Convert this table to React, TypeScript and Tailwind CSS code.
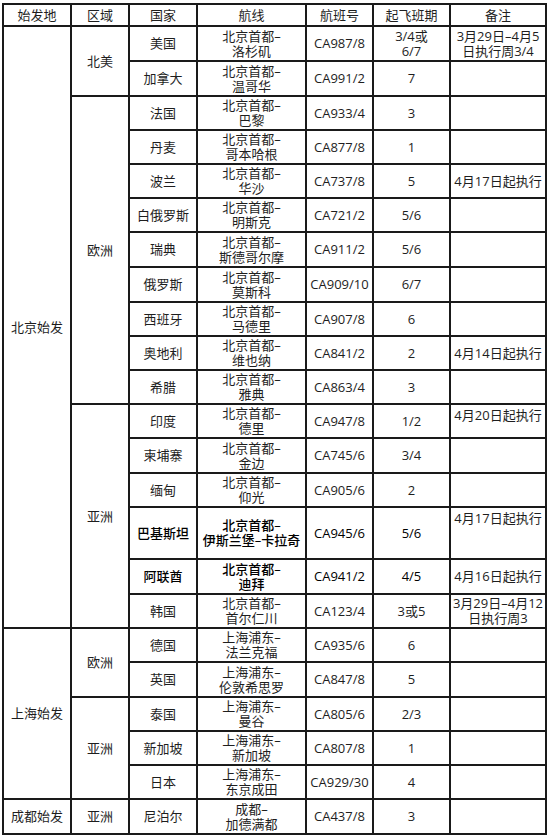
import React from "react"

type Row = {
  origin?: { text: string; span: number }
  region?: { text: string; span: number }
  country: string
  route: [string, string]
  flight: string
  days: string[]
  note?: string[]
  noteTop?: boolean
  bold?: boolean
  h: string
}

const rows: Row[] = [
  { origin: { text: "北京始发", span: 17 }, region: { text: "北美", span: 2 }, country: "美国", route: ["北京首都–", "洛杉矶"], flight: "CA987/8", days: ["3/4或", "6/7"], note: ["3月29日–4月5", "日执行周3/4"], h: "h-[35px]" },
  { country: "加拿大", route: ["北京首都–", "温哥华"], flight: "CA991/2", days: ["7"], h: "h-[35px]" },
  { region: { text: "欧洲", span: 9 }, country: "法国", route: ["北京首都–", "巴黎"], flight: "CA933/4", days: ["3"], h: "h-[34px]" },
  { country: "丹麦", route: ["北京首都–", "哥本哈根"], flight: "CA877/8", days: ["1"], h: "h-[34px]" },
  { country: "波兰", route: ["北京首都–", "华沙"], flight: "CA737/8", days: ["5"], note: ["4月17日起执行"], h: "h-[34px]" },
  { country: "白俄罗斯", route: ["北京首都–", "明斯克"], flight: "CA721/2", days: ["5/6"], h: "h-[34px]" },
  { country: "瑞典", route: ["北京首都–", "斯德哥尔摩"], flight: "CA911/2", days: ["5/6"], h: "h-[35px]" },
  { country: "俄罗斯", route: ["北京首都–", "莫斯科"], flight: "CA909/10", days: ["6/7"], h: "h-[35px]" },
  { country: "西班牙", route: ["北京首都–", "马德里"], flight: "CA907/8", days: ["6"], h: "h-[34px]" },
  { country: "奥地利", route: ["北京首都–", "维也纳"], flight: "CA841/2", days: ["2"], note: ["4月14日起执行"], h: "h-[34px]" },
  { country: "希腊", route: ["北京首都–", "雅典"], flight: "CA863/4", days: ["3"], h: "h-[34px]" },
  { region: { text: "亚洲", span: 6 }, country: "印度", route: ["北京首都–", "德里"], flight: "CA947/8", days: ["1/2"], note: ["4月20日起执行"], noteTop: true, h: "h-[34px]" },
  { country: "柬埔寨", route: ["北京首都–", "金边"], flight: "CA745/6", days: ["3/4"], h: "h-[35px]" },
  { country: "缅甸", route: ["北京首都–", "仰光"], flight: "CA905/6", days: ["2"], h: "h-[34px]" },
  { country: "巴基斯坦", route: ["北京首都–", "伊斯兰堡–卡拉奇"], flight: "CA945/6", days: ["5/6"], note: ["4月17日起执行"], noteTop: true, bold: true, h: "h-[52px]" },
  { country: "阿联酋", route: ["北京首都–", "迪拜"], flight: "CA941/2", days: ["4/5"], note: ["4月16日起执行"], bold: true, h: "h-[35px]" },
  { country: "韩国", route: ["北京首都–", "首尔仁川"], flight: "CA123/4", days: ["3或5"], note: ["3月29日–4月12", "日执行周3"], h: "h-[34px]" },
  { origin: { text: "上海始发", span: 5 }, region: { text: "欧洲", span: 2 }, country: "德国", route: ["上海浦东–", "法兰克福"], flight: "CA935/6", days: ["6"], h: "h-[34px]" },
  { country: "英国", route: ["上海浦东–", "伦敦希思罗"], flight: "CA847/8", days: ["5"], h: "h-[35px]" },
  { region: { text: "亚洲", span: 3 }, country: "泰国", route: ["上海浦东–", "曼谷"], flight: "CA805/6", days: ["2/3"], h: "h-[34px]" },
  { country: "新加坡", route: ["上海浦东–", "新加坡"], flight: "CA807/8", days: ["1"], h: "h-[34px]" },
  { country: "日本", route: ["上海浦东–", "东京成田"], flight: "CA929/30", days: ["4"], h: "h-[34px]" },
  { origin: { text: "成都始发", span: 1 }, region: { text: "亚洲", span: 1 }, country: "尼泊尔", route: ["成都–", "加德满都"], flight: "CA437/8", days: ["3"], h: "h-[35px]" },
]

const cell = "border-2 border-[#1a1a1a] p-0 text-center align-middle"

function Lines({ items }: { items: string[] }) {
  return (
    <>
      {items.map((t, i) => (
        <div key={i}>{t}</div>
      ))}
    </>
  )
}

export default function App() {
  return (
    <div className="min-h-[837px] w-[550px] bg-white pl-[2px] pt-[3px] font-['Open_Sans','Noto_Sans_CJK_SC',sans-serif] text-[13px] leading-[15px] text-[#1e1e1e]">
      <table className="w-[545px] table-fixed border-collapse">
        <colgroup>
          <col className="w-[68px]" />
          <col className="w-[58px]" />
          <col className="w-[68px]" />
          <col className="w-[109px]" />
          <col className="w-[67px]" />
          <col className="w-[77px]" />
          <col className="w-[96px]" />
        </colgroup>
        <thead>
          <tr className="h-[22px]">
            {["始发地", "区域", "国家", "航线", "航班号", "起飞班期", "备注"].map((h) => (
              <th key={h} className={`${cell} font-normal`}>
                {h}
              </th>
            ))}
          </tr>
        </thead>
        <tbody>
          {rows.map((r, i) => {
            const w = r.bold ? "font-medium text-black" : ""
            return (
              <tr key={i} className={r.h}>
                {r.origin && (
                  <td rowSpan={r.origin.span} className={cell}>
                    {r.origin.text}
                  </td>
                )}
                {r.region && (
                  <td rowSpan={r.region.span} className={cell}>
                    {r.region.text}
                  </td>
                )}
                <td className={`${cell} ${w}`}>{r.country}</td>
                <td className={`${cell} ${w}`}>
                  <Lines items={r.route} />
                </td>
                <td className={`${cell} ${w}`}>{r.flight}</td>
                <td className={`${cell} ${w}`}>
                  <Lines items={r.days} />
                </td>
                <td className={`${cell} ${r.noteTop ? "!align-top pt-[3px]" : ""}`}>
                  {r.note && <Lines items={r.note} />}
                </td>
              </tr>
            )
          })}
        </tbody>
      </table>
    </div>
  )
}
